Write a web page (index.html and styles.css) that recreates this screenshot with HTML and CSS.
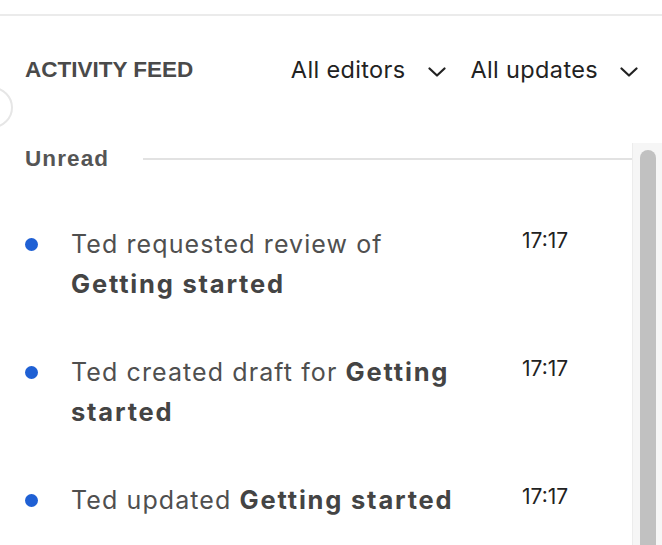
FILE: index.html
```html
<!DOCTYPE html>
<html>
<head>
<meta charset="utf-8">
<link rel="stylesheet" href="styles.css">
</head>
<body>
<div class="page">
  <div class="topbar"></div>
  <div class="side-circle"></div>
  <header class="feed-header">
    <h2 class="feed-title">ACTIVITY FEED</h2>
    <div class="filters">
      <button class="filter">All editors
        <svg class="chev" viewBox="0 0 18 10" width="18" height="10"><path d="M1.5 1.5 L9 8.5 L16.5 1.5" fill="none" stroke="#222" stroke-width="2.2" stroke-linecap="round" stroke-linejoin="round"/></svg>
      </button>
      <button class="filter">All updates
        <svg class="chev" viewBox="0 0 18 10" width="18" height="10"><path d="M1.5 1.5 L9 8.5 L16.5 1.5" fill="none" stroke="#222" stroke-width="2.2" stroke-linecap="round" stroke-linejoin="round"/></svg>
      </button>
    </div>
  </header>
  <div class="scroll-area">
    <div class="scroll-content">
      <div class="section-head">
        <span class="section-label">Unread</span>
        <span class="section-rule"></span>
      </div>
      <ul class="items">
        <li class="item">
          <span class="dot"></span>
          <p class="item-text">Ted requested review of <b>Getting started</b></p>
          <span class="time">17:17</span>
        </li>
        <li class="item">
          <span class="dot"></span>
          <p class="item-text">Ted created draft for <b>Getting started</b></p>
          <span class="time">17:17</span>
        </li>
        <li class="item">
          <span class="dot"></span>
          <p class="item-text">Ted updated <b>Getting started</b></p>
          <span class="time">17:17</span>
        </li>
      </ul>
    </div>
    <div class="scrollbar"><div class="thumb"></div></div>
  </div>
</div>
</body>
</html>
```

FILE: styles.css
```css
* { box-sizing: border-box; }
html, body { margin: 0; padding: 0; background: #fff; }
body { width: 662px; height: 545px; overflow: hidden; font-family: "Inter", "Liberation Sans", sans-serif; }
.page { position: relative; width: 662px; height: 545px; }
.topbar { height: 16px; border-bottom: 2px solid #ebebeb; }
.side-circle {
  position: absolute; left: -28px; top: 87px; width: 41px; height: 41px;
  border-radius: 50%; border: 2px solid #e6e6e6; background: #fff;
}
.feed-header {
  display: flex; align-items: center; justify-content: space-between;
  padding: 38px 24px 57px 25px;
}
.feed-title {
  margin: 0; font-family: "Liberation Sans", sans-serif; font-weight: 700;
  font-size: 22.5px; color: #4a4a4a; line-height: 32px;
}
.filters { display: flex; gap: 25px; }
.filter {
  display: flex; align-items: center; gap: 22px; padding: 0; border: 0; background: none;
  font-family: "Inter", sans-serif; font-size: 23.5px; color: #222; line-height: 32px;
  letter-spacing: 0.35px;
}
.chev { display: block; margin-top: 3px; }
.scroll-area { display: flex; height: 402px; }
.scroll-content { flex: 1; padding-left: 25px; }
.section-head { display: flex; align-items: center; height: 32px; }
.section-label {
  font-family: "Liberation Sans", sans-serif; font-weight: 700; font-size: 22.5px;
  letter-spacing: 1.1px; color: #555;
}
.section-rule { flex: 1; height: 2px; background: #e2e2e2; margin-left: 34px; }
.items { list-style: none; margin: 49px 0 0; padding: 0; display: flex; flex-direction: column; gap: 48px; }
.item { display: flex; align-items: flex-start; }
.dot { width: 13px; height: 13px; border-radius: 50%; background: #1f60d4; margin-top: 14px; flex: none; }
.item-text {
  margin: 0 0 0 33px; width: 410px; font-size: 25px; letter-spacing: 1.1px;
  line-height: 40px; color: #4f4f4f; flex: none;
}
.item-text b { font-weight: 700; color: #444; font-size: 25.5px; letter-spacing: 1.8px; }
.time { margin-left: 41px; font-size: 21px; line-height: 34px; color: #222; }
.scrollbar {
  width: 30px; background: #f6f6f6; border-left: 1px solid #ececec; padding: 7px 0 0 7px;
}
.thumb { width: 16px; height: 420px; background: #c1c1c1; border-radius: 8px 8px 0 0; }
```
